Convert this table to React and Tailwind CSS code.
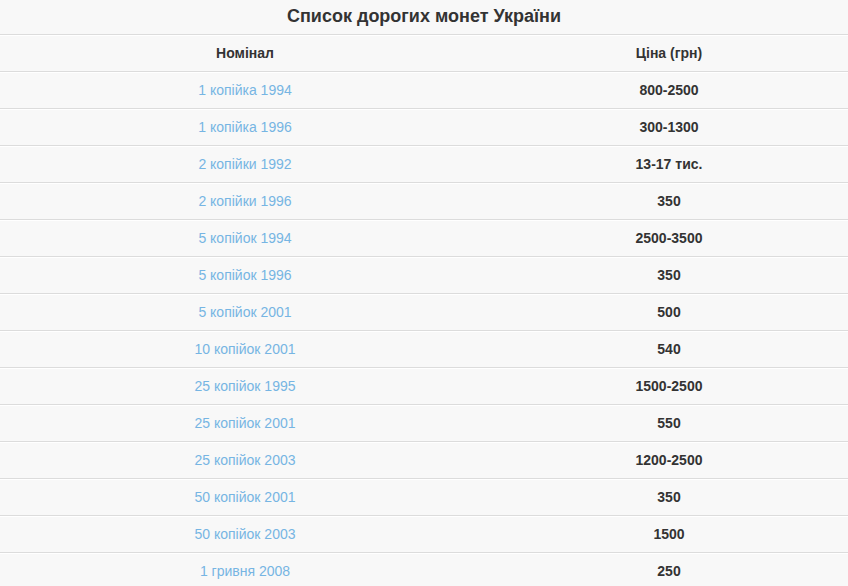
import React from "react";

const coins = [
  { name: "1 копійка 1994", price: "800-2500" },
  { name: "1 копійка 1996", price: "300-1300" },
  { name: "2 копійки 1992", price: "13-17 тис." },
  { name: "2 копійки 1996", price: "350" },
  { name: "5 копійок 1994", price: "2500-3500" },
  { name: "5 копійок 1996", price: "350" },
  { name: "5 копійок 2001", price: "500" },
  { name: "10 копійок 2001", price: "540" },
  { name: "25 копійок 1995", price: "1500-2500" },
  { name: "25 копійок 2001", price: "550" },
  { name: "25 копійок 2003", price: "1200-2500" },
  { name: "50 копійок 2001", price: "350" },
  { name: "50 копійок 2003", price: "1500" },
  { name: "1 гривня 2008", price: "250" },
];

const Row = ({ children }) => (
  <div className="grid grid-cols-[490px_1fr] h-[37px] border-t border-[#dcdcdc] shadow-[inset_0_1px_0_#ffffff] items-center text-center">
    {children}
  </div>
);

export default function App() {
  return (
    <div
      className="min-h-screen bg-[#f8f8f8] text-[#333] text-[14px]"
      style={{ fontFamily: '"Liberation Sans", Arial, sans-serif' }}
    >
      <h2 className="h-[34px] flex items-center justify-center text-[18px] font-bold text-[#333] pb-[2px]">
        Список дорогих монет України
      </h2>
      <Row>
        <div className="font-bold">Номінал</div>
        <div className="font-bold">Ціна (грн)</div>
      </Row>
      {coins.map((c, i) => (
        <Row key={i}>
          <div>
            <a href="#" className="text-[#76b5e3]">{c.name}</a>
          </div>
          <div className="font-bold">{c.price}</div>
        </Row>
      ))}
    </div>
  );
}
